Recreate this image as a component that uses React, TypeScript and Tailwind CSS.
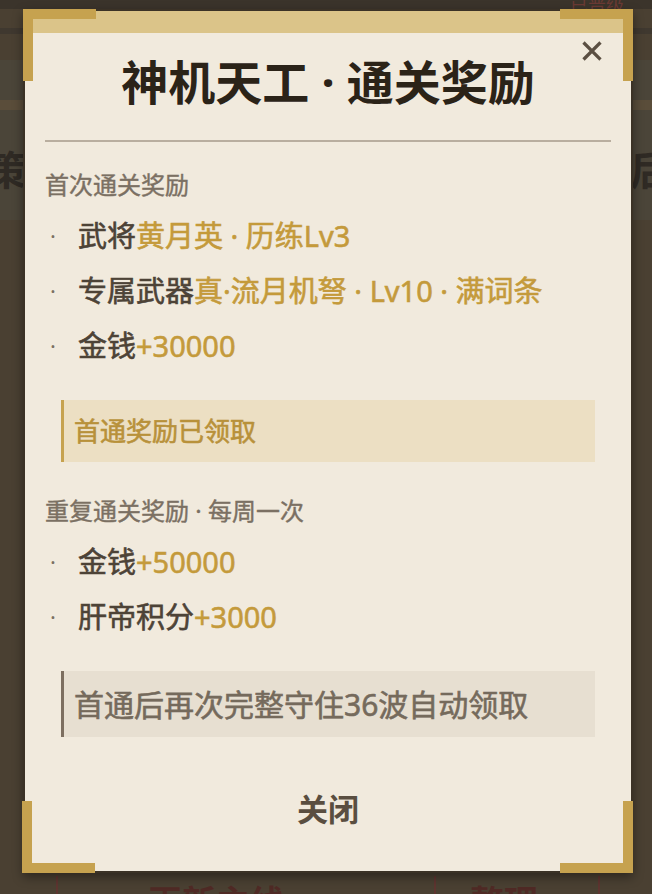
import React from "react";

const FONT = { fontFamily: '"Noto Sans", "Noto Sans CJK SC", sans-serif' };

type Part = { text: string; gold?: boolean };

function Item({ parts }: { parts: Part[] }) {
  return (
    <div className="flex h-[55px] items-center text-[29px] [-webkit-text-stroke:0.6px]">
      <span className="w-[33px] pl-[5px] text-[22px] text-[#7b7063] [-webkit-text-stroke:0px]">·</span>
      <span className="whitespace-nowrap">
        {parts.map((p, i) => (
          <span key={i} className={p.gold ? "text-[#c49a3b]" : "text-[#4d4337]"}>
            {p.text}
          </span>
        ))}
      </span>
    </div>
  );
}

function Corner({ pos }: { pos: string }) {
  return <div className={`absolute h-[72px] w-[73px] border-[#c6a24f] ${pos}`} />;
}

export default function App() {
  return (
    <div className="relative h-[894px] w-[652px] overflow-hidden bg-[#4a4032]" style={FONT}>
      {/* blurred page behind */}
      <div className="absolute inset-x-0 top-0 h-[9px] bg-[#3b342b]" />
      <div className="absolute left-0 top-[28px] h-[6px] w-full bg-[#3f382f]" />
      <div className="absolute left-0 top-[60px] h-[160px] w-full bg-[#4b4539]" />
      <div className="absolute left-0 top-[100px] h-[10px] w-full bg-[#5a4d3a]" />
      <div className="absolute left-[-14px] top-[140px] text-[40px] font-bold leading-[60px] text-[#2f2a24]">策</div>
      <div className="absolute right-[-18px] top-[140px] text-[40px] font-bold leading-[60px] text-[#2f2a24]">后</div>
      <div className="absolute left-[570px] top-[-8px] text-[18px] text-[#6b3a34]">已晋级</div>
      <div className="absolute left-[56px] top-[876px] h-[30px] w-[2px] bg-[#5e3530]" />
      <div className="absolute left-[434px] top-[876px] h-[30px] w-[2px] bg-[#5e3530]" />
      <div className="absolute left-[598px] top-[876px] h-[30px] w-[2px] bg-[#5e3530]" />
      <div className="absolute left-[148px] top-[882px] text-[34px] font-bold leading-[40px] text-[#4f2a25]">再新主线</div>
      <div className="absolute left-[470px] top-[882px] text-[34px] font-bold leading-[40px] text-[#4f2a25]">整理</div>

      {/* modal */}
      <div className="absolute left-[23px] top-[9px] h-[864px] w-[610px] border-2 border-[#3b3226] bg-[#f1eadd] shadow-[0_4px_10px_rgba(0,0,0,0.4)]">
        <div className="h-[22px] bg-[#dbc489]" />
        <div className="flex flex-col px-[20px]">
          <h1 className="mt-[21px] text-center text-[47px] font-bold leading-[56px] text-[#2b2318]">
            神机天工 · 通关奖励
          </h1>
          <div className="mt-[30px] h-[2px] bg-[#b9ae9f]" />

          <div className="mt-[28px] text-[24px] leading-[30px] text-[#7b7063] [-webkit-text-stroke:0.4px]">首次通关奖励</div>
          <div className="mt-[8px] flex flex-col">
            <Item parts={[{ text: "武将" }, { text: "黄月英 · 历练Lv3", gold: true }]} />
            <Item parts={[{ text: "专属武器" }, { text: "真·流月机弩 · Lv10 · 满词条", gold: true }]} />
            <Item parts={[{ text: "金钱" }, { text: "+30000", gold: true }]} />
          </div>
          <div className="mx-[16px] mt-[27px] flex h-[62px] items-center border-l-[3px] border-[#c6a24f] bg-[#ecdfc3] pl-[10px] text-[26px] text-[#b8913a] [-webkit-text-stroke:0.6px]">
            首通奖励已领取
          </div>

          <div className="mt-[34px] text-[24px] leading-[30px] text-[#7b7063] [-webkit-text-stroke:0.4px]">重复通关奖励 · 每周一次</div>
          <div className="mt-[8px] flex flex-col">
            <Item parts={[{ text: "金钱" }, { text: "+50000", gold: true }]} />
            <Item parts={[{ text: "肝帝积分" }, { text: "+3000", gold: true }]} />
          </div>
          <div className="mx-[16px] mt-[27px] flex h-[66px] items-center border-l-[3px] border-[#7d6f60] bg-[#e7dfd1] pl-[10px] text-[30px] text-[#756a5c] [-webkit-text-stroke:0.6px]">
            首通后再次完整守住36波自动领取
          </div>

          <button className="mt-[52px] self-center text-[31px] font-bold leading-[40px] text-[#5a4e40]">关闭</button>
        </div>

        <button className="absolute right-[27px] top-[28px] flex h-[24px] w-[24px] items-center justify-center">
          <svg viewBox="0 0 24 24" className="h-[22px] w-[22px]" fill="none" stroke="#5b4f42" strokeWidth="3.6" strokeLinecap="square">
            <path d="M4 4 L20 20 M20 4 L4 20" />
          </svg>
        </button>
      </div>

      {/* gold corner brackets */}
      <Corner pos="left-[23px] top-[9px] border-l-[10px] border-t-[10px]" />
      <Corner pos="left-[560px] top-[9px] border-r-[10px] border-t-[10px]" />
      <Corner pos="left-[22px] top-[801px] border-b-[10px] border-l-[10px]" />
      <Corner pos="left-[560px] top-[801px] border-b-[10px] border-r-[10px]" />
    </div>
  );
}
